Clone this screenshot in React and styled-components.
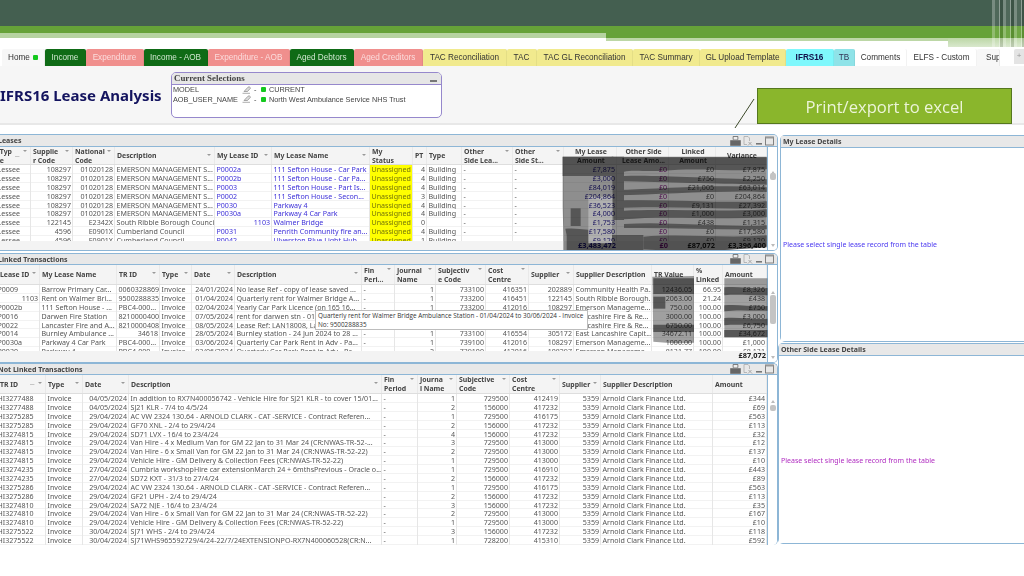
import React from 'react';
import styled, { createGlobalStyle } from 'styled-components';

const GlobalStyle = createGlobalStyle`
    html, body {
        margin: 0;
        height: 576px;
        overflow: hidden;
        background: #fff;
        font-family: "Noto Sans", "Liberation Sans", sans-serif;
    }
`

const tabs = [
    { label: 'Home', w: 43, bg: '#f7f7f7', color: '#333', dot: true },
    { label: 'Income', w: 41, bg: '#0f6b16', color: '#cfe6cf' },
    { label: 'Expenditure', w: 58, bg: '#f08f8d', color: '#fbdcdc' },
    { label: 'Income - AOB', w: 64, bg: '#0f6b16', color: '#cfe6cf' },
    { label: 'Expenditure - AOB', w: 82, bg: '#f08f8d', color: '#fbdcdc' },
    { label: 'Aged Debtors', w: 64, bg: '#0f6b16', color: '#cfe6cf' },
    { label: 'Aged Creditors', w: 69, bg: '#f08f8d', color: '#fbdcdc' },
    { label: 'TAC Reconciliation', w: 84, bg: '#f1ea8e', color: '#333' },
    { label: 'TAC', w: 30, bg: '#f1ea8e', color: '#333' },
    { label: 'TAC GL Reconciliation', w: 96, bg: '#f1ea8e', color: '#333' },
    { label: 'TAC Summary', w: 67, bg: '#f1ea8e', color: '#333' },
    { label: 'GL Upload Template', w: 86, bg: '#f1ea8e', color: '#333' },
    { label: 'IFRS16', w: 48, bg: '#7ff8fc', color: '#10104a', bold: true },
    { label: 'TB', w: 21, bg: '#8fe3e8', color: '#335' },
    { label: 'Comments', w: 52, bg: '#fff', color: '#333' },
    { label: 'ELFS - Custom', w: 70, bg: '#fff', color: '#333' },
    { label: 'Sup', w: 23, bg: '#f7f7f7', color: '#333', clip: true },
]

const selections = [
    ['MODEL', 'CURRENT'],
    ['AOB_USER_NAME', 'North West Ambulance Service NHS Trust'],
]

const leaseCols = '35px 42px 42px 100px 57px 98px 43px 14px 35px 51px 51px 53px 52px 47px 51px'
const leaseHead = [
    { label: ' Typ\n e', sort: 'on' },
    { label: 'Supplie\nr Code', sort: 'y' },
    { label: 'National\nCode', sort: 'y' },
    { label: 'Description', sort: 'y' },
    { label: 'My Lease ID', sort: 'y' },
    { label: 'My Lease Name', sort: 'y' },
    { label: 'My\nStatus' },
    { label: 'PT' },
    { label: 'Type' },
    { label: 'Other\nSide Lea...', sort: 'y' },
    { label: 'Other\nSide St...', sort: 'y' },
    { label: 'My Lease\nAmount', center: true },
    { label: 'Other Side\nLease Amo...', center: true },
    { label: 'Linked\nAmount', center: true },
    { label: 'Variance', center: true },
]
const leaseAlign = ['l', 'r', 'r', 'l', 'l', 'l', 'l', 'r', 'l', 'l', 'l', 'r', 'r', 'r', 'r']
const leaseTone = [null, null, null, null, 'link', 'link', 'flag', null, null, null, null, 'navy', 'purple', null, null]
const em = 'EMERSON MANAGEMENT S...'
const leaseRows = [
    ['Lessee', '108297', '01020128', em, 'P0002a', '111 Sefton House - Car Park', 'Unassigned', '4', 'Building', '-', '-', '£7,875', '£0', '£0', '£7,875'],
    ['Lessee', '108297', '01020128', em, 'P0002b', '111 Sefton House - Car Pa...', 'Unassigned', '4', 'Building', '-', '-', '£3,000', '£0', '£750', '£2,250'],
    ['Lessee', '108297', '01020128', em, 'P0003', '111 Sefton House - Part Is...', 'Unassigned', '4', 'Building', '-', '-', '£84,019', '£0', '£21,005', '£63,014'],
    ['Lessee', '108297', '01020128', em, 'P0002', '111 Sefton House - Secon...', 'Unassigned', '3', 'Building', '-', '-', '£204,864', '£0', '£0', '£204,864'],
    ['Lessee', '108297', '01020128', em, 'P0030', 'Parkway 4', 'Unassigned', '4', 'Building', '-', '-', '£36,523', '£0', '£9,131', '£27,392'],
    ['Lessee', '108297', '01020128', em, 'P0030a', 'Parkway 4 Car Park', 'Unassigned', '4', 'Building', '-', '-', '£4,000', '£0', '£1,000', '£3,000'],
    ['Lessee', '122145', 'E2342X', 'South Ribble Borough Council', { v: '1103', r: true }, 'Walmer Bridge', 'Unassigned', '0', '', '-', '-', '£1,753', '£0', '£438', '£1,315'],
    ['Lessee', '4596', 'E0901X', 'Cumberland Council', 'P0031', 'Penrith Community fire an...', 'Unassigned', '4', 'Building', '-', '-', '£17,580', '£0', '£0', '£17,580'],
    ['Lessee', '4596', 'E0901X', 'Cumberland Council', 'P0042', 'Ulverston Blue Light Hub', 'Unassigned', '1', 'Building', '-', '-', '£9,120', '£0', '£0', '£9,120'],
]
const leaseTotals = ['', '', '', '', '', '', '', '', '', '', '', '£3,483,472', '£0', '£87,072', '£3,396,400']

const linkedCols = '44px 77px 43px 32px 43px 127px 33px 41px 50px 43px 45px 78px 42px 29px 44px'
const linkedHead = [
    { label: 'Lease ID', sort: 'y', indent: true },
    { label: 'My Lease Name' },
    { label: 'TR ID', sort: 'y' },
    { label: 'Type', sort: 'y' },
    { label: 'Date', sort: 'y' },
    { label: 'Description', sort: 'y' },
    { label: 'Fin\nPeri...', sort: 'y' },
    { label: 'Journal\nName', sort: 'y' },
    { label: 'Subjectiv\ne Code', sort: 'y' },
    { label: 'Cost\nCentre', sort: 'y' },
    { label: 'Supplier', sort: 'y' },
    { label: 'Supplier Description' },
    { label: 'TR Value' },
    { label: '%\nLinked' },
    { label: 'Amount' },
]
const linkedAlign = ['l', 'l', 'l', 'l', 'r', 'l', 'l', 'r', 'r', 'r', 'r', 'l', 'r', 'r', 'r']
const linkedRows = [
    ['P0009', 'Barrow Primary Car...', '0060328869', 'Invoice', '24/01/2024', 'No lease Ref - copy of lease saved ...', '-', '1', '733100', '416351', '202889', 'Community Health Pa...', '12436.05', '66.95', '£8,326'],
    [{ v: '1103', r: true }, 'Rent on Walmer Bri...', '9500288835', 'Invoice', '01/04/2024', 'Quarterly rent for Walmer Bridge A...', '-', '1', '733200', '416451', '122145', 'South Ribble Borough...', '2063.00', '21.24', '£438'],
    ['P0002b', '111 Sefton House - ...', 'PBC4-000...', 'Invoice', '02/04/2024', 'Yearly Car Park Licence (on 165 16...', '-', '1', '733200', '412016', '108297', 'Emerson Manageme...', '750.00', '100.00', '£750'],
    ['P0016', 'Darwen Fire Station', '8210000400', 'Invoice', '07/05/2024', 'rent for darwen stn - 01/05/2024...', '-', '1', '733100', '416211', '305170', 'Lancashire Fire & Re...', '3000.00', '100.00', '£3,000'],
    ['P0022', 'Lancaster Fire and A...', '8210000408', 'Invoice', '08/05/2024', 'Lease Ref: LAN18008, Lancaster...', '-', '1', '733100', '416212', '305170', 'Lancashire Fire & Re...', '6750.00', '100.00', '£6,750'],
    ['P0014', 'Burnley Ambulance ...', { v: '34618', r: true }, 'Invoice', '28/05/2024', 'Burnley station - 24 Jun 2024 to 28 ...', '-', '1', '733100', '416554', '305172', 'East Lancashire Capit...', '34672.11', '100.00', '£34,672'],
    ['P0030a', 'Parkway 4 Car Park', 'PBC4-000...', 'Invoice', '03/06/2024', 'Quarterly Car Park Rent in Adv - Pa...', '-', '1', '739100', '412016', '108297', 'Emerson Manageme...', '1000.00', '100.00', '£1,000'],
    ['P0030', 'Parkway 4', 'PBC4-000...', 'Invoice', '03/06/2024', 'Quarterly Car Park Rent in Adv - Pa...', '-', '2', '739100', '412016', '108297', 'Emerson Manageme...', '8131.77', '100.00', '£8,131'],
]
const linkedTotals = ['', '', '', '', '', '', '', '', '', '', '', '', '', '', '£87,072']

const openCols = '50px 37px 46px 253px 36px 39px 53px 50px 41px 112px 54px'
const openHead = [
    { label: 'TR ID', sort: 'on', indent: true },
    { label: 'Type', sort: 'y' },
    { label: 'Date', sort: 'y' },
    { label: 'Description', sort: 'y' },
    { label: 'Fin\nPeriod', sort: 'y' },
    { label: 'Journa\nl Name', sort: 'y' },
    { label: 'Subjective\nCode', sort: 'y' },
    { label: 'Cost\nCentre', sort: 'y' },
    { label: 'Supplier', sort: 'y' },
    { label: 'Supplier Description' },
    { label: 'Amount' },
]
const openAlign = ['l', 'l', 'r', 'l', 'l', 'r', 'r', 'r', 'r', 'l', 'r']
const open = (id, date, desc, journal, subj, cost, amount) =>
    [id, 'Invoice', date, desc, '-', journal, subj, cost, '5359', 'Arnold Clark Finance Ltd.', amount]
const openRows = [
    open('HI3277488', '04/05/2024', 'In addition to RX7N400056742 - Vehicle Hire for SJ21 KLR - to cover 15/01...', '1', '729500', '412419', '£344'),
    open('HI3277488', '04/05/2024', 'SJ21 KLR - 7/4 to 4/5/24', '2', '156000', '417232', '£69'),
    open('HI3275285', '29/04/2024', 'AC VW 2324 130.64 - ARNOLD CLARK - CAT -SERVICE - Contract Referen...', '1', '729500', '416175', '£563'),
    open('HI3275285', '29/04/2024', 'GF70 XNL - 2/4 to 29/4/24', '2', '156000', '417232', '£113'),
    open('HI3274815', '29/04/2024', 'SD71 LVX - 16/4 to 23/4/24', '4', '156000', '417232', '£32'),
    open('HI3274815', '29/04/2024', 'Van Hire - 4 x Medium Van for GM 22 Jan to 31 Mar 24 (CR:NWAS-TR-52-...', '3', '729500', '413000', '£12'),
    open('HI3274815', '29/04/2024', 'Van Hire - 6 x Small Van for GM 22 Jan to 31 Mar 24 (CR:NWAS-TR-52-22)', '2', '729500', '413000', '£137'),
    open('HI3274815', '29/04/2024', 'Vehicle Hire - GM Delivery & Collection Fees (CR:NWAS-TR-52-22)', '1', '729500', '413000', '£10'),
    open('HI3274235', '27/04/2024', 'Cumbria workshopHire car extensionMarch 24 + 6mthsPrevious - Oracle o...', '1', '729500', '416910', '£443'),
    open('HI3274235', '27/04/2024', 'SD72 KXT - 31/3 to 27/4/24', '2', '156000', '417232', '£89'),
    open('HI3275286', '29/04/2024', 'AC VW 2324 130.64 - ARNOLD CLARK - CAT -SERVICE - Contract Referen...', '1', '729500', '416175', '£563'),
    open('HI3275286', '29/04/2024', 'GF21 UPH - 2/4 to 29/4/24', '2', '156000', '417232', '£113'),
    open('HI3274810', '29/04/2024', 'SA72 NJE - 16/4 to 23/4/24', '3', '156000', '417232', '£35'),
    open('HI3274810', '29/04/2024', 'Van Hire - 6 x Small Van for GM 22 Jan to 31 Mar 24 (CR:NWAS-TR-52-22)', '2', '729500', '413000', '£167'),
    open('HI3274810', '29/04/2024', 'Vehicle Hire - GM Delivery & Collection Fees (CR:NWAS-TR-52-22)', '1', '729500', '413000', '£10'),
    open('HI3275522', '30/04/2024', 'SJ71 WHS - 2/4 to 29/4/24', '3', '156000', '417232', '£118'),
    open('HI3275522', '30/04/2024', 'SJ71WHS965592729/4/24-22/7/24EXTENSIONPO-RX7N400060528(CR:N...', '1', '728200', '415310', '£592'),
]

const Page = styled.div`
    width: 1024px;
    height: 576px;
    overflow: hidden;
    background: #fff;
    filter: blur(0.3px);
`

const Banner = styled.div`
    position: relative;
    height: 47px;
    margin-bottom: 2px;
`

const BannerDark = styled.div`
    height: 26px;
    background: #445f50;
`

const BannerGreen = styled.div`
    height: 12px;
    background: #66a238;
    & > div {
        width: 606px;
        height: 12px;
        background: linear-gradient(#66a238 0 7px, #b6d3a0 7px 12px);
    }
`

const BannerFoot = styled.div`
    display: flex;
    height: 9px;
    background: #fff;
`

const FootLine = styled.div`
    width: 342px;
    margin-left: 606px;
    height: 6px;
    background: linear-gradient(#bcd7a6 0 3px, #fff 3px 6px);
`

const FootEnd = styled.div`
    flex: 1;
    background: linear-gradient(#bcd7a6, #d9e8cd);
`

const BannerStripes = styled.div`
    position: absolute;
    top: 0;
    right: 0;
    bottom: 0;
    width: 32px;
    background: repeating-linear-gradient(90deg,
        rgba(255, 255, 255, 0.28) 0 3px,
        rgba(255, 255, 255, 0.06) 3px 7px,
        rgba(255, 255, 255, 0.4) 7px 8px,
        rgba(0, 0, 0, 0.12) 8px 11px);
`

const TabBar = styled.div`
    display: flex;
    height: 17px;
    padding-left: 2px;
    background: #fff;
`

const Tab = styled.div`
    display: flex;
    align-items: center;
    justify-content: ${p => p.$clip ? 'flex-start' : 'center'};
    gap: 3px;
    width: ${p => p.$w}px;
    box-sizing: border-box;
    padding-left: ${p => p.$clip ? 9 : 0}px;
    overflow: hidden;
    white-space: nowrap;
    background: ${p => p.$bg};
    color: ${p => p.$color};
    font: ${p => p.$bold ? 'bold' : 'normal'} 8.2px "Liberation Sans", sans-serif;
    border-right: 1px solid rgba(0, 0, 0, 0.05);
    border-radius: 2px 2px 0 0;
`

const AddTab = styled.div`
    width: 10px;
    margin-left: 14px;
    height: 15px;
    background: #e4e4e4;
    border-radius: 2px 0 0 0;
    color: #999;
    font: 8px/14px "Liberation Sans", sans-serif;
    text-align: center;
`

const GreenDot = styled.span`
    display: inline-block;
    width: 5px;
    height: 5px;
    background: #14c81e;
    border-radius: 1px;
`

const Header = styled.div`
    position: relative;
    display: flex;
    align-items: center;
    height: 59px;
    box-sizing: border-box;
    background: #f6f6f6;
    border-bottom: 2px solid #e8e8e8;
`

const Title = styled.h1`
    width: 171px;
    margin: 0;
    color: #14145f;
    font: bold 15px "Noto Sans", sans-serif;
    white-space: nowrap;
`

const SelectionBox = styled.div`
    width: 271px;
    height: 46px;
    margin-top: 1px;
    box-sizing: border-box;
    background: #fff;
    border: 1px solid #9688cc;
    border-radius: 5px;
    overflow: hidden;
`

const SelectionCaption = styled.div`
    display: flex;
    justify-content: space-between;
    align-items: flex-end;
    height: 12px;
    padding: 0 4px 1px 2px;
    box-sizing: border-box;
    background: #e6e6e6;
    border-bottom: 1px solid #9688cc;
    color: #444;
    font: bold 8.9px "Liberation Serif", serif;
`

const CaptionDash = styled.span`
    display: block;
    width: 7px;
    height: 2px;
    margin-bottom: 1px;
    background: #777;
`

const SelectionRow = styled.div`
    display: grid;
    grid-template-columns: 69px 12px 7px 8px 1fr;
    align-items: center;
    height: 9.5px;
    padding-left: 1px;
    color: #444;
    font: 7.3px "Liberation Sans", sans-serif;
    white-space: nowrap;
`

const Callout = styled.div`
    position: absolute;
    top: 22px;
    left: 757px;
    width: 255px;
    height: 36px;
    box-sizing: border-box;
    display: flex;
    align-items: center;
    justify-content: center;
    background: #8ab62c;
    border: 1px solid #55771e;
    color: #ecf4d8;
    font: 16.6px "Open Sans", sans-serif;
`

const CalloutLine = styled.svg`
    position: absolute;
    top: 32px;
    left: 734px;
    z-index: 2;
`

const Main = styled.div`
    display: flex;
    margin-top: 9px;
    height: 411px;
`

const LeftColumn = styled.div`
    width: 778px;
    flex: none;
    display: flex;
    flex-direction: column;
`

const RightColumn = styled.div`
    flex: 1;
    display: flex;
    flex-direction: column;
`

const PanelBox = styled.section`
    position: relative;
    height: ${p => p.$h}px;
    margin-top: ${p => p.$gap}px;
    flex: none;
    box-sizing: border-box;
    border-right: 1px solid #8db6d6;
    border-top: 1px solid #8db6d6;
    border-bottom: ${p => p.$open ? 0 : 1}px solid #8db6d6;
    border-radius: 0 5px 5px 0;
    overflow: hidden;
`

const CaptionBar = styled.div`
    display: flex;
    align-items: center;
    justify-content: space-between;
    height: ${p => p.$h}px;
    flex: none;
    box-sizing: border-box;
    padding: 0 3px 0 ${p => p.$pad}px;
    background: #e8e8e8;
    border-bottom: 1px solid #8db6d6;
    color: #444;
    font: bold 7px "Noto Sans", sans-serif;
    white-space: nowrap;
`

const CaptionTitle = styled.span`
    margin-left: ${p => p.$shift}px;
`

const CaptionTools = styled.div`
    display: flex;
    align-items: center;
    gap: 2px;
`

const GridFrame = styled.div`
    display: flex;
`

const GridClip = styled.div`
    width: 767px;
    flex: none;
    overflow: hidden;
    border-right: 1px solid #8db6d6;
`

const GridInner = styled.div`
    margin-left: -4px;
`

const HeadRow = styled.div`
    display: grid;
    grid-template-columns: ${p => p.$cols};
    height: ${p => p.$h}px;
    background: #f4f4f4;
    border-bottom: 1px solid #dedede;
    box-sizing: border-box;
`

const HeadCell = styled.div`
    position: relative;
    display: flex;
    align-items: center;
    justify-content: ${p => p.$center ? 'center' : 'flex-start'};
    text-align: ${p => p.$center ? 'center' : 'left'};
    padding-left: ${p => p.$indent ? 4 : 2}px;
    border-right: 1px solid #e9e9e9;
    color: #444;
    font: bold 6.9px/9px "Noto Sans", sans-serif;
    white-space: pre;
    overflow: hidden;
`

const SortMark = styled.span`
    position: absolute;
    top: ${p => p.$top}px;
    right: 3px;
    width: 0;
    height: 0;
    border-left: 2px solid transparent;
    border-right: 2px solid transparent;
    border-top: 2px solid #999;
`

const SortedMark = styled.span`
    position: absolute;
    top: 4px;
    right: 10px;
    color: #aaa;
    font: 6px "DejaVu Sans", sans-serif;
`

const BodyClip = styled.div`
    height: ${p => p.$h}px;
    overflow: hidden;
    background: #fff;
`

const Row = styled.div`
    display: grid;
    grid-template-columns: ${p => p.$cols};
    height: 8.88px;
    box-shadow: inset 0 -0.5px 0 #e6e6e6;
`

const Cell = styled.div`
    padding: 0 ${p => p.$align === 'r' ? 1 : 1.5}px;
    border-right: 0.5px solid #e6e6e6;
    overflow: hidden;
    white-space: nowrap;
    text-align: ${p => p.$align === 'r' ? 'right' : 'left'};
    color: ${p => ({ link: '#3c2fd8', navy: '#28208a', purple: '#8a1c8a', flag: '#77770a' }[p.$tone] || '#555')};
    background: ${p => p.$tone === 'flag' ? '#ffff00' : 'transparent'};
    font: 7.1px/8.88px "Noto Sans", sans-serif;
`

const FooterStrip = styled.div`
    display: grid;
    grid-template-columns: ${p => p.$cols};
    height: ${p => p.$h}px;
    background: #f3f3f3;
`

const TotalCell = styled.div`
    padding: 0 1px;
    text-align: right;
    color: ${p => ({ navy: '#1c1480', purple: '#7a1080' }[p.$tone] || '#222')};
    font: bold 7.4px/9px "Noto Sans", sans-serif;
    white-space: nowrap;
`

const ScrollTrack = styled.div`
    flex: 1;
    display: flex;
    flex-direction: column;
    align-items: center;
    height: ${p => p.$h}px;
    padding-top: ${p => p.$top}px;
    box-sizing: border-box;
    background: #fff;
`

const ScrollArrow = styled.span`
    width: 0;
    height: 0;
    margin-top: ${p => p.$down ? 'auto' : 0};
    margin-bottom: ${p => p.$down ? 3 : 0}px;
    border-left: 2.5px solid transparent;
    border-right: 2.5px solid transparent;
    border-bottom: ${p => p.$down ? 0 : 3}px solid #bbb;
    border-top: ${p => p.$down ? 3 : 0}px solid #bbb;
`

const ScrollThumb = styled.span`
    width: 6px;
    height: ${p => p.$h}px;
    border-radius: 2px;
    background: #c4c4c4;
`

const Mask = styled.svg`
    position: absolute;
    top: ${p => p.$top}px;
    left: ${p => p.$left}px;
    mix-blend-mode: multiply;
    pointer-events: none;
`

const Tooltip = styled.div`
    position: absolute;
    top: 56px;
    left: 315px;
    width: 273px;
    height: 20px;
    box-sizing: border-box;
    padding: 1px 2px;
    background: #fff;
    border: 1px solid #bdbdbd;
    color: #333;
    font: 6.4px/8.6px "Open Sans", sans-serif;
    white-space: nowrap;
`

const DetailPanel = styled.section`
    height: ${p => p.$h}px;
    margin: ${p => p.$top}px 0 0 ${p => p.$left}px;
    flex: none;
    display: flex;
    flex-direction: column;
    box-sizing: border-box;
    border: 1px solid #8db6d6;
    border-right: 0;
    border-radius: 5px 0 0 5px;
`

const DetailBody = styled.div`
    flex: 1;
    display: flex;
    align-items: center;
    padding: ${p => p.$offset}px 0 0 2px;
    background: #fff;
    color: ${p => p.$color};
    font: 7px "Noto Sans", sans-serif;
    white-space: nowrap;
`

const SaveIcon = () => (
    <svg width="11" height="10" viewBox="0 0 11 10">
        <path d="M3 .5h5v3H3zM.5 4.5h10v5H.5z" fill="#666" stroke="#666" strokeWidth=".6" />
        <path d="M3.5 1h4v2.4h-4z" fill="#eee" />
    </svg>
)

const ExportIcon = () => (
    <svg width="10" height="10" viewBox="0 0 10 10" fill="none" stroke="#aaa" strokeWidth=".8">
        <path d="M1 .5h4l1.5 1.5v3M1 .5v8h3" />
        <path d="M5.5 6l3.500 3.500M8.500 6L5 9.500" stroke="#999" />
    </svg>
)

const MinIcon = () => (
    <svg width="8" height="10" viewBox="0 0 8 10">
        <rect x="1" y="7" width="6" height="1.600" fill="#777" />
    </svg>
)

const MaxIcon = () => (
    <svg width="9" height="10" viewBox="0 0 9 10" fill="none">
        <rect x=".5" y="1" width="8" height="8" stroke="#777" strokeWidth=".9" />
        <rect x=".5" y="1" width="8" height="1.500" fill="#999" />
    </svg>
)

const EraserIcon = () => (
    <svg width="10" height="8" viewBox="0 0 10 8" fill="none">
        <path d="M2 5.500 6 1.200c1-.8 2.800 0 2.300 1.200L5.500 5.500z" fill="#ddd" stroke="#888" strokeWidth=".7" />
        <path d="M.5 7.300h7.500" stroke="#999" strokeWidth=".8" />
    </svg>
)

// scribbled-out money columns, drawn over the first table
const LeaseMask = () => (
    <Mask $top={5} $left={550} width="230" height="115" viewBox="0 0 690 345">
        <path d="M38 50H650V318L430 338 280 330H40V280L38 200Z" fill="#8e8e8e" />
        <g fill="#565656">
            <path d="M38 50H190V108H38Z" />
            <path d="M185 50H222V240H190Z" />
            <path d="M222 52H650V88C560 96 440 82 340 92 290 96 250 88 222 95Z" />
            <path d="M222 108C320 104 470 116 650 118V134C520 132 400 128 222 124Z" />
            <path d="M190 150C340 146 500 132 650 142V156C500 150 340 164 195 166Z" />
            <path d="M190 182C340 176 500 190 650 184V204C500 210 340 196 195 205Z" />
            <path d="M222 212C340 206 500 216 650 208V232C500 240 340 226 222 238Z" />
            <path d="M222 252C360 244 500 262 650 256V268C500 270 360 262 222 264Z" />
            <path d="M280 290C400 280 520 296 650 286V322L430 336 280 328Z" />
            <path d="M50 285H280V330H50Z" />
            <path d="M46 266C90 262 140 276 182 272V286H50Z" />
            <path d="M62 205H92V258H62Z" />
        </g>
        <path d="M115 170H186V310H115Z" fill="#b0b0b0" />
    </Mask>
)

const LinkedMask = () => (
    <Mask $top={-4} $left={390} width="400" height="125" viewBox="0 0 1200 375">
        <path d="M787 80 912 78V278Q850 282 790 275Z" fill="#a0a0a0" />
        <path d="M1003 85H1132V262H1003Z" fill="#a0a0a0" />
        <g fill="#565656">
            <path d="M790 85H912V132H790Z" />
            <path d="M790 140H826V176H790Z" />
            <path d="M790 224H912V246H790Z" />
            <path d="M1003 112C1050 108 1090 118 1132 114V136C1090 138 1050 132 1003 136Z" />
            <path d="M1003 166C1050 162 1090 172 1132 168V182C1090 184 1050 178 1003 184Z" />
            <path d="M1003 204C1050 200 1090 210 1132 206V226C1090 228 1050 222 1003 226Z" />
            <path d="M1003 240H1132V262H1003Z" />
        </g>
    </Mask>
)

const valueOf = v => (v && v.v !== undefined ? v.v : v)

const DataGrid = ({ cols, head, headH, rows, align, tones, bodyH, totals, totalTones, footH, thumbH, thumbTop, showDown }) => (
    <GridFrame>
        <GridClip>
            <GridInner>
                <HeadRow $cols={cols} $h={headH}>
                    {head.map((h, i) => (
                        <HeadCell key={i} $center={h.center} $indent={h.indent}>
                            {h.label}
                            {h.sort === 'on' && <SortedMark>⚊</SortedMark>}
                            {h.sort && <SortMark $top={h.label.includes('\n') ? 3 : 7} />}
                        </HeadCell>
                    ))}
                </HeadRow>
                <BodyClip $h={bodyH}>
                    {rows.map((row, r) => (
                        <Row key={r} $cols={cols}>
                            {row.map((c, i) => (
                                <Cell
                                    key={i}
                                    $align={c && c.r ? 'r' : align[i]}
                                    $tone={tones ? tones[i] : null}
                                >
                                    {valueOf(c)}
                                </Cell>
                            ))}
                        </Row>
                    ))}
                </BodyClip>
                {totals && (
                    <FooterStrip $cols={cols} $h={footH}>
                        {totals.map((t, i) => (
                            <TotalCell key={i} $tone={totalTones ? totalTones[i] : null}>{t}</TotalCell>
                        ))}
                    </FooterStrip>
                )}
            </GridInner>
        </GridClip>
        <ScrollTrack $h={headH + bodyH + (totals ? footH : 0)} $top={headH + 6}>
            <ScrollArrow />
            <ScrollThumb $h={thumbH} style={{ marginTop: thumbTop }} />
            {showDown && <ScrollArrow $down />}
        </ScrollTrack>
    </GridFrame>
)

const Panel = ({ title, h, gap, captionH, open, children }) => (
    <PanelBox $h={h} $gap={gap} $open={open}>
        <CaptionBar $h={captionH} $pad={0}>
            <CaptionTitle $shift={-2}>{title}</CaptionTitle>
            <CaptionTools>
                <SaveIcon />
                <ExportIcon />
                <MinIcon />
                <MaxIcon />
            </CaptionTools>
        </CaptionBar>
        {children}
    </PanelBox>
)

const totalTones = [null, null, null, null, null, null, null, null, null, null, null, 'navy', 'purple', null, null]

const App = () => {
    return (
        <Page>
            <GlobalStyle />
            <Banner>
                <BannerDark />
                <BannerGreen><div /></BannerGreen>
                <BannerFoot><FootLine /><FootEnd /></BannerFoot>
                <BannerStripes />
            </Banner>
            <TabBar>
                {tabs.map(t => (
                    <Tab key={t.label} $w={t.w} $bg={t.bg} $color={t.color} $bold={t.bold} $clip={t.clip}>
                        {t.label}
                        {t.dot && <GreenDot />}
                    </Tab>
                ))}
                <AddTab>+</AddTab>
            </TabBar>
            <Header>
                <Title>IFRS16 Lease Analysis</Title>
                <SelectionBox>
                    <SelectionCaption>Current Selections<CaptionDash /></SelectionCaption>
                    {selections.map(([name, value]) => (
                        <SelectionRow key={name}>
                            <span>{name}</span>
                            <EraserIcon />
                            <span>-</span>
                            <GreenDot />
                            <span>{value}</span>
                        </SelectionRow>
                    ))}
                </SelectionBox>
                <CalloutLine width="24" height="34" viewBox="0 0 24 34">
                    <path d="M20 1 1 30" stroke="#3d4a2a" strokeWidth="1" />
                </CalloutLine>
                <Callout>Print/export to excel</Callout>
            </Header>
            <Main>
                <LeftColumn>
                    <Panel title="Leases" h={117} gap={0} captionH={12}>
                        <DataGrid
                            cols={leaseCols}
                            head={leaseHead}
                            headH={18}
                            rows={leaseRows}
                            align={leaseAlign}
                            tones={leaseTone}
                            bodyH={76}
                            totals={leaseTotals}
                            totalTones={totalTones}
                            footH={9}
                            thumbH={7}
                            thumbTop={-1}
                            showDown
                        />
                        <LeaseMask />
                    </Panel>
                    <Panel title="Linked Transactions" h={110} gap={2} captionH={11}>
                        <DataGrid
                            cols={linkedCols}
                            head={linkedHead}
                            headH={20}
                            rows={linkedRows}
                            align={linkedAlign}
                            bodyH={66}
                            totals={linkedTotals}
                            footH={11}
                            thumbH={29}
                            thumbTop={1}
                            showDown
                        />
                        <LinkedMask />
                        <Tooltip>
                            Quarterly rent for Walmer Bridge Ambulance Station - 01/04/2024 to 30/06/2024 - Invoice<br />
                            No: 9500288835
                        </Tooltip>
                    </Panel>
                    <Panel title="Not Linked Transactions" h={182} gap={0} captionH={11} open>
                        <DataGrid
                            cols={openCols}
                            head={openHead}
                            headH={19}
                            rows={openRows}
                            align={openAlign}
                            bodyH={151}
                            thumbH={6}
                            thumbTop={2}
                        />
                    </Panel>
                </LeftColumn>
                <RightColumn>
                    <DetailPanel $h={207} $top={1} $left={2}>
                        <CaptionBar $h={12} $pad={2}>My Lease Details</CaptionBar>
                        <DetailBody $color="#4a38f0" $offset={0}>Please select single lease record from the table</DetailBody>
                    </DetailPanel>
                    <DetailPanel $h={201} $top={1} $left={0}>
                        <CaptionBar $h={12} $pad={2}>Other Side Lease Details</CaptionBar>
                        <DetailBody $color="#b02cc0" $offset={22}>Please select single lease record from the table</DetailBody>
                    </DetailPanel>
                </RightColumn>
            </Main>
        </Page>
    )
}

export default App
